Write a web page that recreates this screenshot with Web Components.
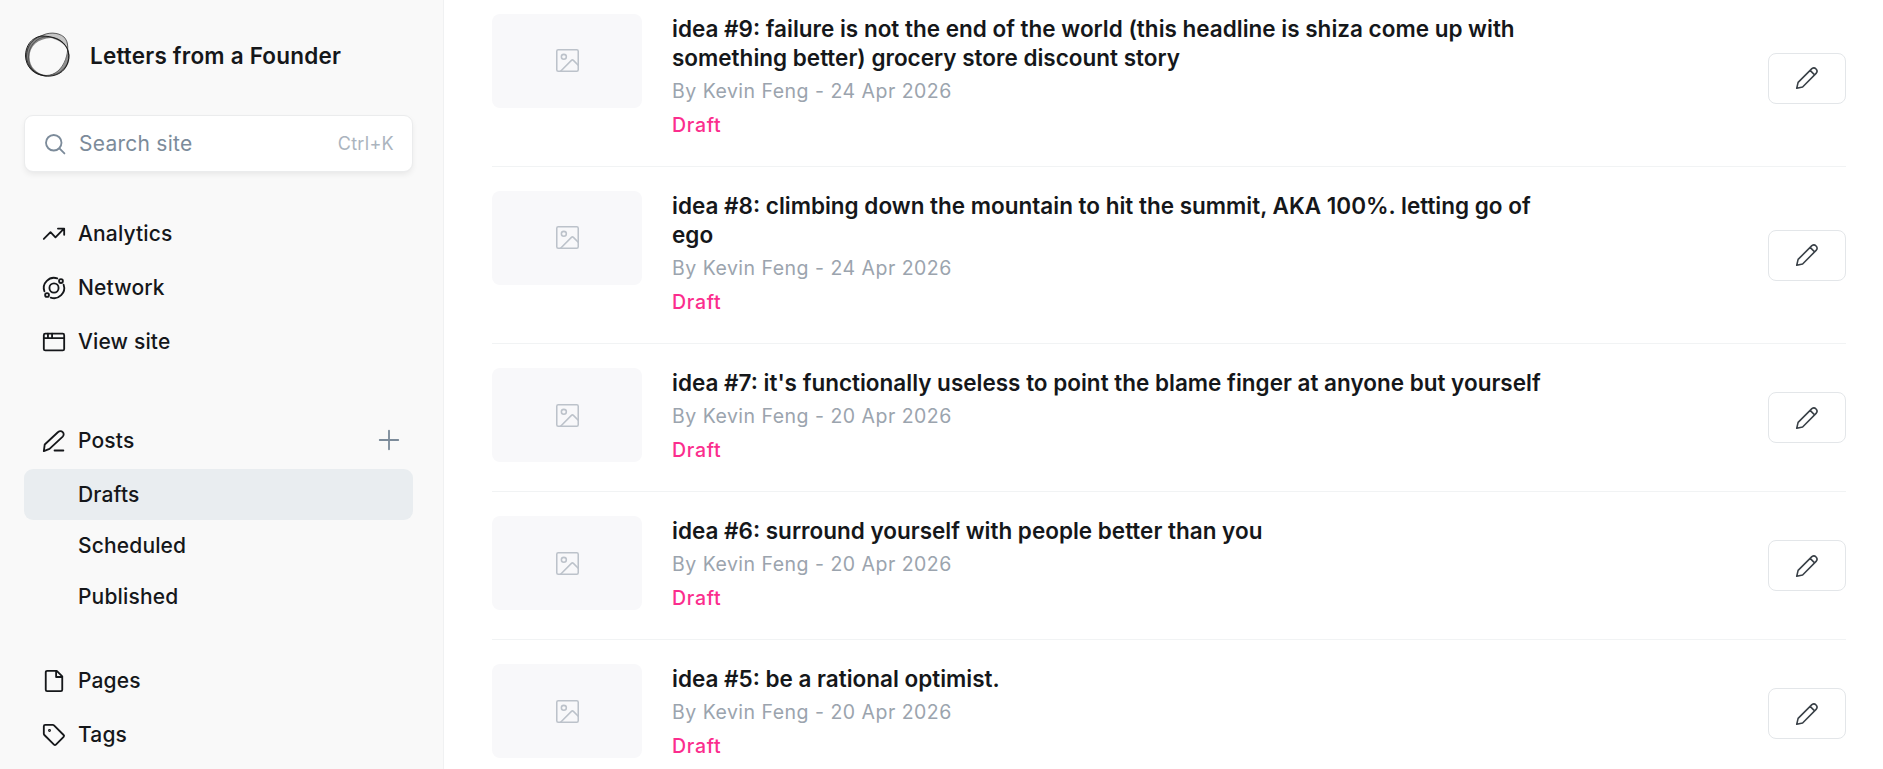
<!DOCTYPE html>
<html lang="en">
<head>
<meta charset="utf-8">
<title>Letters from a Founder</title>
<style>
html, body {
  margin: 0;
  height: 100%;
  overflow: hidden;
}
body {
  background: #fff;
  color: #15171a;
  font-family: Inter, "Liberation Sans", sans-serif;
}
</style>
</head>
<body>
<admin-app>
  <admin-sidebar slot="sidebar" site="Letters from a Founder">
    <nav-group>
      <nav-item icon="analytics">Analytics</nav-item>
      <nav-item icon="network">Network</nav-item>
      <nav-item icon="browser">View site</nav-item>
    </nav-group>
    <nav-group>
      <nav-item icon="posts" add>Posts</nav-item>
      <nav-item sub active>Drafts</nav-item>
      <nav-item sub>Scheduled</nav-item>
      <nav-item sub>Published</nav-item>
    </nav-group>
    <nav-group>
      <nav-item icon="page">Pages</nav-item>
      <nav-item icon="tag">Tags</nav-item>
    </nav-group>
  </admin-sidebar>
  <post-row author="Kevin Feng" date="24 Apr 2026">idea #9: failure is not the end of the world (this headline is shiza come up with something better) grocery store discount story</post-row>
  <post-row author="Kevin Feng" date="24 Apr 2026">idea #8: climbing down the mountain to hit the summit, AKA 100%. letting go of ego</post-row>
  <post-row author="Kevin Feng" date="20 Apr 2026">idea #7: it's functionally useless to point the blame finger at anyone but yourself</post-row>
  <post-row author="Kevin Feng" date="20 Apr 2026">idea #6: surround yourself with people better than you</post-row>
  <post-row author="Kevin Feng" date="20 Apr 2026">idea #5: be a rational optimist.</post-row>
</admin-app>

<script>
const icons = {
  analytics: '<path d="M.9 17.4 8.2 10l5.4 5.6 9-9.3M16.3 6.1h6.8v6.8"/>',
  network: '<circle cx="12" cy="12" r="5"/><circle cx="19.6" cy="4.4" r="2.1"/><circle cx="4.4" cy="19.6" r="2.1"/><path d="M15.6 1.5A11.1 11.1 0 0 0 1.5 15.6M8.4 22.5A11.1 11.1 0 0 0 22.5 8.4"/>',
  browser: '<rect x=".9" y="2.9" width="22.2" height="18.2" rx="1.6"/><path d="M.9 7.8h22.2M5.4 3v4.5M9.9 3v4.5"/>',
  posts: '<path d="M7.1 20.6.9 23l1-7.2L16.5 2.2a3.5 3.5 0 0 1 5 0 3.5 3.5 0 0 1 0 5L7.1 20.6ZM12.6 22.4h9.6"/>',
  page: '<path d="M21 21.6a1.5 1.5 0 0 1-1.5 1.5h-15A1.5 1.5 0 0 1 3 21.6V2.4A1.5 1.5 0 0 1 4.5.9H15l6 6v14.7ZM14.3.9v6.7H21"/>',
  tag: '<path d="M2.4.9h8.2a2 2 0 0 1 1.4.6l10.5 10.5a1.5 1.5 0 0 1 0 2.1l-8.4 8.4a1.5 1.5 0 0 1-2.1 0L1.5 12a2 2 0 0 1-.6-1.4V2.4A1.5 1.5 0 0 1 2.4.9Z"/><circle cx="7.1" cy="7.1" r=".6"/>',
  search: '<circle cx="10.5" cy="10.5" r="9.3"/><path d="m17.3 17.3 6 6"/>',
  plus: '<path d="M12 .9v22.2M.9 12h22.2"/>',
  image: '<rect x=".8" y=".8" width="22.4" height="22.4" rx="1.5"/><circle cx="8.2" cy="8.2" r="2.6"/><path d="M4.8 23.2 16.1 11.9a1.5 1.5 0 0 1 2.1 0l5 5"/>',
  pencil: '<path d="M7.2 21.8.8 23.2l1.5-6.4L17.3 1.8a3.5 3.5 0 0 1 4.9 4.9L7.2 21.8ZM15.4 3.7l4.9 4.9"/>'
}

const svg = (name, size, stroke) => `<svg viewBox="0 0 24 24" width="${size}" height="${size}" fill="none" stroke="currentColor" stroke-width="${stroke}" stroke-linecap="round" stroke-linejoin="round" overflow="visible">${icons[name]}</svg>`

class AdminApp extends HTMLElement {
  constructor () {
    super()
    this.attachShadow({ mode: 'open' }).innerHTML = `
<style>
:host {
  display: flex;
  height: 769px;
  overflow: hidden;
}
main {
  flex: 1;
  min-width: 0;
  padding: 0 37px 0 48px;
  margin-top: -10.5px;
}
</style>
<slot name="sidebar"></slot>
<main><slot></slot></main>`
  }
}

class SiteLogo extends HTMLElement {
  constructor () {
    super()
    this.attachShadow({ mode: 'open' }).innerHTML = `
<style>
:host { display: block; width: 48px; height: 48px; }
svg { display: block; }
</style>
<svg viewBox="0 0 48 48" width="48" height="48" fill="none">
  <!-- translucent bands between the rings -->
  <path fill="#111" fill-opacity=".5" d="M19 4.500C8 7 1.500 15 1.500 25c0 11 9 20.500 22 20.500C12 42 5.500 36 5.500 26 5.500 15 14 7.500 27 7Z"/>
  <path fill="#111" fill-opacity=".22" d="M17 5C25 0 34 1 40 6c4 4 4.500 8 4 13C40 10 30 6 17 5Z"/>
  <path fill="#111" fill-opacity=".35" d="M21 5.500c11-.5 19 3 22.500 12.500C39 11 32 8 21 5.500Z"/>
  <path fill="#111" fill-opacity=".45" d="M44 18c3.500 8 1 17-5 22-5 4-10 5-15 4.500C37 42 43 31 44 18Z"/>
  <g stroke="#111" stroke-width="1" stroke-linejoin="round">
    <path stroke-opacity=".9" d="M17 5C28 5 39 8 43.500 18c3 9 .5 17-5.500 22.500-5 4-11 5-16 4.500C10 44 2 36 1.500 25 1.500 15 7 7 17 5Z"/>
    <path stroke-opacity=".6" d="M17 5C24 1 34 1 40 6c5 5 4.500 14 1.500 22.500C38 38 31 44.500 22 44.500 11 43.500 3 36 2.500 25 3 15 8 8 17 5Z"/>
    <path stroke-opacity=".4" d="M20 6C33 5 43 12 45 24 45 36 35 44.500 24 45 12 45 4.500 37 4.500 26 4.500 16 11 8 20 6Z"/>
  </g>
</svg>`
  }
}

class AdminSidebar extends HTMLElement {
  constructor () {
    super()
    this.attachShadow({ mode: 'open' }).innerHTML = `
<style>
:host {
  display: block;
  box-sizing: border-box;
  width: 444px;
  flex: none;
  padding: 31px 30px 0 24px;
  background: #f9f9f9;
  border-right: 1px solid #f0f1f2;
}
header {
  display: flex;
  align-items: center;
  gap: 18px;
  height: 48px;
  font-size: 22.5px;
  font-weight: 600;
  letter-spacing: .2px;
}
.search {
  display: flex;
  align-items: center;
  box-sizing: border-box;
  height: 57px;
  margin-top: 36px;
  padding: 0 18px 0 20px;
  background: #fff;
  border: 1px solid #ebeced;
  border-radius: 9px;
  box-shadow: 0 3px 6px -1px rgba(0, 0, 0, .08);
  color: #7c8b9a;
  font-size: 21px;
  letter-spacing: .25px;
}
.search svg { margin-right: 14px; }
kbd {
  margin-left: auto;
  color: #abb4be;
  font: inherit;
  font-size: 18px;
  letter-spacing: .3px;
}
nav {
  display: flex;
  flex-direction: column;
  gap: 33px;
  margin-top: 36px;
}
::slotted(:first-child) { margin-bottom: 12px; }
</style>
<header><site-logo></site-logo><span id="site"></span></header>
<div class="search">${svg('search', 20, 2.2)}<span>Search site</span><kbd>Ctrl+K</kbd></div>
<nav><slot></slot></nav>`
  }

  connectedCallback () {
    this.shadowRoot.querySelector('#site').textContent = this.getAttribute('site')
  }
}

class NavGroup extends HTMLElement {
  constructor () {
    super()
    this.attachShadow({ mode: 'open' }).innerHTML = `
<style>
:host { display: block; }
</style>
<slot></slot>`
  }
}

class NavItem extends HTMLElement {
  constructor () {
    super()
    this.attachShadow({ mode: 'open' })
  }

  connectedCallback () {
    const icon = this.getAttribute('icon')
    this.shadowRoot.innerHTML = `
<style>
:host {
  display: flex;
  align-items: center;
  box-sizing: border-box;
  height: 51px;
  margin-bottom: 3px;
  padding: 0 14px 0 19px;
  border-radius: 9px;
  font-size: 21px;
  font-weight: 500;
  letter-spacing: .15px;
}
:host([sub]) {
  margin-bottom: 0;
  padding-left: 54px;
}
:host([active]) { background: #e9edf0; }
.icon { margin-right: 13px; display: flex; }
.add { margin: 0 0 1px auto; display: flex; color: #7c8b9a; }
</style>
${icon ? `<span class="icon">${svg(icon, 22, 2)}</span>` : ''}
<slot></slot>
${this.hasAttribute('add') ? `<span class="add">${svg('plus', 20, 2.2)}</span>` : ''}`
  }
}

class PostRow extends HTMLElement {
  constructor () {
    super()
    this.attachShadow({ mode: 'open' })
  }

  connectedCallback () {
    this.shadowRoot.innerHTML = `
<style>
:host {
  display: flex;
  box-sizing: border-box;
  padding: 24px 0 23.25px;
  border-bottom: 1px solid #f1f3f4;
}
.thumb {
  display: flex;
  align-items: center;
  justify-content: center;
  flex: none;
  width: 150px;
  height: 94px;
  margin-right: 30px;
  border-radius: 8px;
  background: #f8f8fa;
  color: #bcc2ca;
}
.text { width: 880px; }
h3 {
  margin: 0;
  font-size: 22.5px;
  font-weight: 600;
  line-height: 29.25px;
}
p {
  margin: 3px 0 0;
  color: #9ba4ae;
  font-size: 19.5px;
  line-height: 33.75px;
  letter-spacing: .48px;
}
.status {
  margin: 0;
  color: #fb2d8d;
  font-weight: 500;
  letter-spacing: .7px;
}
.edit {
  display: flex;
  align-items: center;
  justify-content: center;
  align-self: center;
  box-sizing: border-box;
  width: 78px;
  height: 51px;
  margin-left: auto;
  border: 1px solid #e3e6e9;
  border-radius: 8px;
  color: #394047;
}
</style>
<div class="thumb">${svg('image', 23, 1.6)}</div>
<div class="text">
  <h3><slot></slot></h3>
  <p>By ${this.getAttribute('author')} - ${this.getAttribute('date')}</p>
  <p class="status">Draft</p>
</div>
<div class="edit">${svg('pencil', 22, 1.7)}</div>`
  }
}

customElements.define('site-logo', SiteLogo)
customElements.define('admin-app', AdminApp)
customElements.define('admin-sidebar', AdminSidebar)
customElements.define('nav-group', NavGroup)
customElements.define('nav-item', NavItem)
customElements.define('post-row', PostRow)
</script>
</body>
</html>
